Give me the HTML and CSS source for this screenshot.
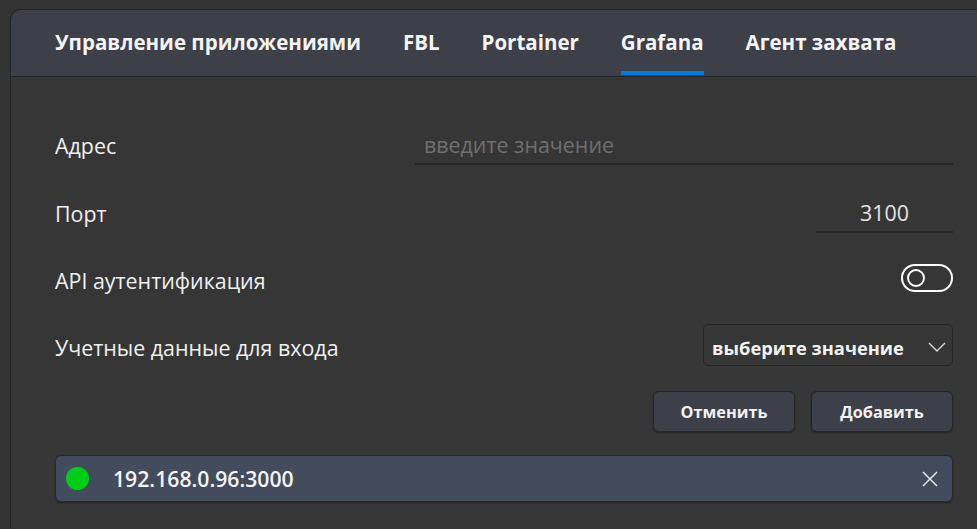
FILE: index.html
```html
<!DOCTYPE html>
<html lang="ru">
<head>
<meta charset="utf-8">
<title>Grafana</title>
<link rel="stylesheet" href="styles.css">
</head>
<body>
<div class="panel">
  <div class="tabs">
    <div class="tab">Управление приложениями</div>
    <div class="tab">FBL</div>
    <div class="tab">Portainer</div>
    <div class="tab active">Grafana</div>
    <div class="tab">Агент захвата</div>
  </div>
  <div class="content">
    <div class="row row-addr">
      <div class="label">Адрес</div>
      <div class="field field-addr"><span class="placeholder">введите значение</span></div>
    </div>
    <div class="row row-port">
      <div class="label">Порт</div>
      <div class="field field-port">3100</div>
    </div>
    <div class="row row-api">
      <div class="label">API аутентификация</div>
      <div class="toggle"><span class="knob"></span></div>
    </div>
    <div class="row row-cred">
      <div class="label">Учетные данные для входа</div>
      <div class="select">
        <span class="select-text">выберите значение</span>
        <svg class="chevron" width="18" height="10" viewBox="0 0 18 10"><path d="M1 1 L9 9 L17 1" fill="none" stroke="#d8d8d8" stroke-width="1.4"/></svg>
      </div>
    </div>
    <div class="actions">
      <button class="btn">Отменить</button>
      <button class="btn">Добавить</button>
    </div>
    <div class="item">
      <span class="dot"></span>
      <span class="item-text">192.168.0.96:3000</span>
      <svg class="close" width="16" height="16" viewBox="0 0 16 16"><path d="M1 1 L15 15 M15 1 L1 15" fill="none" stroke="#e6e6e6" stroke-width="1.5"/></svg>
    </div>
  </div>
</div>
</body>
</html>
```
FILE: styles.css
```css
html, body {
  margin: 0;
  padding: 0;
  overflow: hidden;
  height: 100%;
}
body {
  background: #333333;
  font-family: "Open Sans", "Noto Sans", sans-serif;
  color: #f2f2f2;
}
.panel {
  margin: 9px 0 0 10px;
  width: 987px;
  height: 540px;
  box-sizing: border-box;
  background: #363636;
  border: 1px solid #262626;
  border-bottom: 0;
  border-radius: 11px 11px 0 0;
  overflow: hidden;
}
.tabs {
  display: flex;
  height: 67px;
  box-sizing: border-box;
  background: #3d3f49;
  border-bottom: 1px solid #262626;
  padding-left: 44px;
  gap: 42px;
}
.tab {
  display: flex;
  align-items: center;
  font-size: 20.5px;
  font-weight: 700;
  color: #f4f4f4;
  position: relative;
  padding-bottom: 2px;
}
.tab.active::after {
  content: "";
  position: absolute;
  left: 0;
  right: 0;
  bottom: 1px;
  height: 4px;
  background: #0a7ad6;
}
.content {
  padding: 48px 43px 0 44px;
  display: flex;
  flex-direction: column;
}
.row {
  display: flex;
  align-items: center;
  justify-content: space-between;
}
.label {
  font-size: 21.4px;
  color: #f0f0f0;
}
.row-addr { height: 40px; }
.row-port { height: 40px; margin-top: 28px; }
.row-api { height: 40px; margin-top: 25px; }
.row-cred { height: 42px; margin-top: 26px; }
.row-cred .label { padding-top: 5px; }
.row-api .label { padding-top: 4px; }
.field {
  height: 40px;
  border-bottom: 2px solid #272727;
  display: flex;
  align-items: center;
  font-size: 21.4px;
  box-sizing: border-box;
}
.field-addr {
  width: 538px;
  padding-left: 9px;
}
.placeholder {
  color: #6f6f6f;
}
.field-port {
  width: 137px;
  justify-content: center;
  color: #e4e4e4;
}
.toggle {
  width: 52px;
  height: 28px;
  box-sizing: border-box;
  border: 2px solid #ffffff;
  border-radius: 14px;
  display: flex;
  align-items: center;
  padding-left: 4px;
}
.knob {
  width: 18px;
  height: 18px;
  box-sizing: border-box;
  border: 2px solid #ffffff;
  border-radius: 50%;
}
.select {
  width: 250px;
  height: 42px;
  box-sizing: border-box;
  border: 1px solid #262626;
  border-radius: 5px;
  display: flex;
  align-items: center;
  justify-content: space-between;
  padding: 4px 6px 0 8px;
}
.select-text {
  font-size: 18.3px;
  font-weight: 700;
  color: #f2f2f2;
}
.actions {
  display: flex;
  justify-content: flex-end;
  gap: 16px;
  margin-top: 25px;
}
.btn {
  width: 142px;
  height: 41px;
  background: #3d3f49;
  border: 1px solid #262626;
  border-radius: 6px;
  color: #f2f2f2;
  font-family: "Open Sans", "Noto Sans", sans-serif;
  font-size: 16.3px;
  font-weight: 700;
  box-shadow: 0 1px 2px rgba(0,0,0,0.3);
}
.item {
  margin-top: 23px;
  height: 47px;
  box-sizing: border-box;
  background: #424c5c;
  border: 1px solid #2a2a2a;
  border-radius: 6px;
  display: flex;
  align-items: center;
  padding: 0 14px 0 10px;
  box-shadow: 0 1px 2px rgba(0,0,0,0.35);
}
.dot {
  width: 23px;
  height: 23px;
  border-radius: 50%;
  background: #00cc1a;
}
.item-text {
  margin-left: 24px;
  font-size: 21.2px;
  font-weight: 600;
  color: #f4f4f4;
  flex: 1;
}
```
